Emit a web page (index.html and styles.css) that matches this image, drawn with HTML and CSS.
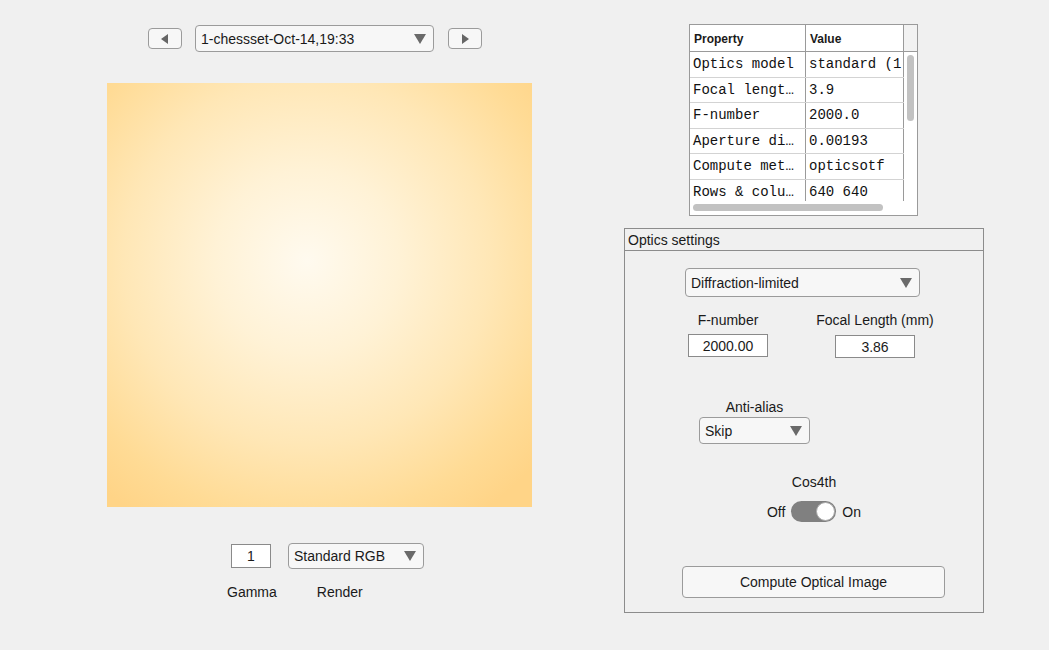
FILE: index.html
```html
<!DOCTYPE html>
<html>
<head>
<meta charset="utf-8">
<link rel="stylesheet" href="styles.css">
</head>
<body>
<div class="app">
  <div class="left">
    <div class="nav">
      <button class="navbtn"><svg width="8" height="10" viewBox="0 0 8 10"><path d="M7 0 L0 5 L7 10 Z" fill="#666"/></svg></button>
      <div class="select sel-scene"><span>1-chessset-Oct-14,19:33</span><span class="caret"></span></div>
      <button class="navbtn"><svg width="8" height="10" viewBox="0 0 8 10"><path d="M1 0 L8 5 L1 10 Z" fill="#666"/></svg></button>
    </div>
    <div class="image"></div>
    <div class="render-row">
      <div class="field gamma">1</div>
      <div class="select sel-render"><span>Standard RGB</span><span class="caret"></span></div>
    </div>
    <div class="render-labels">
      <span class="lbl-gamma">Gamma</span>
      <span class="lbl-render">Render</span>
    </div>
  </div>
  <div class="right">
    <div class="table">
      <div class="thead">
        <div class="c1">Property</div><div class="c2">Value</div><div class="c3"></div>
      </div>
      <div class="tbody">
        <div class="rows">
          <div class="row"><div class="c1">Optics model</div><div class="c2">standard (1.</div></div>
          <div class="row"><div class="c1">Focal lengt…</div><div class="c2">3.9</div></div>
          <div class="row"><div class="c1">F-number</div><div class="c2">2000.0</div></div>
          <div class="row"><div class="c1">Aperture di…</div><div class="c2">0.00193</div></div>
          <div class="row"><div class="c1">Compute met…</div><div class="c2">opticsotf</div></div>
          <div class="row"><div class="c1">Rows &amp; colu…</div><div class="c2">640 640</div></div>
        </div>
        <div class="vscroll"><div class="vthumb"></div></div>
      </div>
      <div class="hscroll"><div class="hthumb"></div></div>
    </div>
    <div class="panel">
      <div class="panel-title">Optics settings</div>
      <div class="panel-body">
        <div class="select sel-model"><span>Diffraction-limited</span><span class="caret"></span></div>
        <div class="pair">
          <div class="pcol fcol">
            <div class="plabel">F-number</div>
            <div class="field fnum">2000.00</div>
          </div>
          <div class="pcol lcol">
            <div class="plabel">Focal Length (mm)</div>
            <div class="field flen">3.86</div>
          </div>
        </div>
        <div class="aa">
          <div class="plabel">Anti-alias</div>
          <div class="select sel-skip"><span>Skip</span><span class="caret"></span></div>
        </div>
        <div class="cos">
          <div class="plabel">Cos4th</div>
          <div class="toggle-row">
            <span>Off</span>
            <div class="switch"><div class="knob"></div></div>
            <span>On</span>
          </div>
        </div>
        <button class="compute">Compute Optical Image</button>
      </div>
    </div>
  </div>
</div>
</body>
</html>
```
FILE: styles.css
```css
* { box-sizing: border-box; }
html, body { margin: 0; padding: 0; }
body {
  background: #f0f0f0;
  font-family: "Liberation Sans", Arial, sans-serif;
  font-size: 14px;
  color: #1a1a1a;
  width: 1049px;
  height: 650px;
  overflow: hidden;
}
.app { display: flex; }
.left { width: 624px; display: flex; flex-direction: column; }
.nav {
  display: flex; align-items: center;
  margin: 25px 0 0 148px;
  height: 27px;
}
.navbtn {
  width: 34px; height: 21px;
  border: 1px solid #9b9b9b; border-radius: 4px;
  background: #f7f7f7;
  display: flex; align-items: center; justify-content: center;
  padding: 0;
}
.select {
  display: flex; align-items: center; justify-content: space-between;
  border: 1px solid #9b9b9b; border-radius: 4px;
  background: #f7f7f7;
  padding: 0 7px 0 5px;
  font-size: 14px;
}
.caret {
  width: 0; height: 0;
  border-left: 6px solid transparent; border-right: 6px solid transparent;
  border-top: 10px solid #6a6a6a;
}
.sel-scene { width: 239px; height: 27px; margin: 0 14px 0 13px; }
.image {
  margin: 31px 0 0 107px;
  width: 425px; height: 424px;
  background: radial-gradient(ellipse 72% 72% at 47% 42%, #fffaef 0%, #fff2d6 30%, #ffe7b6 60%, #ffdb95 85%, #ffd487 100%);
}
.render-row {
  display: flex; align-items: center;
  margin: 36px 0 0 231px;
}
.field {
  border: 1px solid #8a8a8a; background: #fff;
  display: flex; align-items: center; justify-content: center;
  font-size: 14px;
}
.gamma { width: 40px; height: 24px; }
.sel-render { width: 136px; height: 26px; margin-left: 17px; }
.render-labels {
  display: flex; margin: 15px 0 0 227px; font-size: 14px;
}
.lbl-render { margin-left: 40px; }

.right { width: 425px; display: flex; flex-direction: column; }
.table {
  margin: 24px 0 0 65px;
  width: 229px; height: 192px;
  border: 1px solid #9a9a9a; background: #f2f2f2;
  display: flex; flex-direction: column;
}
.thead { display: flex; height: 27px; background: #fff; border-bottom: 1px solid #9a9a9a; }
.thead div { font-size: 12px; font-weight: bold; padding: 7px 0 0 4px; }
.thead .c1 { width: 116px; border-right: 1px solid #9a9a9a; }
.thead .c2 { width: 98px; border-right: 1px solid #9a9a9a; }
.thead .c3 { flex: 1; background: #f2f2f2; }
.tbody { display: flex; height: 149px; overflow: hidden; background: #fff; }
.rows { width: 214px; }
.row { display: flex; height: 25.6px; border-bottom: 1px solid #d3d3d3; }
.row div {
  font-family: "Liberation Mono", "Courier New", monospace; font-size: 14px; color: #111;
  padding: 4px 0 0 3px; white-space: nowrap; overflow: hidden;
}
.row .c1 { width: 116px; border-right: 1px solid #9a9a9a; }
.row .c2 { width: 98px; border-right: 1px solid #9a9a9a; }
.vscroll { flex: 1; background: #fff; position: relative; }
.vthumb { width: 7px; height: 66px; margin: 3px 0 0 3px; background: #c2c2c2; border-radius: 4px; }
.hscroll { flex: 1; background: #fff; padding-top: 3px; }
.hthumb { width: 190px; height: 7px; margin-left: 3px; background: #c2c2c2; border-radius: 4px; }

.panel {
  margin: 12px 0 0 0;
  width: 360px; height: 385px;
  border: 1px solid #8c8c8c;
  display: flex; flex-direction: column;
}
.panel-title {
  height: 22px; border-bottom: 1px solid #8c8c8c;
  padding: 3px 0 0 3px; font-size: 14px;
}
.panel-body { display: flex; flex-direction: column; }
.sel-model { width: 235px; height: 29px; margin: 17px 0 0 60px; }
.pair { display: flex; margin-top: 15px; }
.pcol { display: flex; flex-direction: column; align-items: center; }
.plabel { font-size: 14px; line-height: 17px; }
.fcol { width: 80px; margin-left: 63px; }
.lcol { width: 130px; margin-left: 42px; }
.field.fnum { width: 80px; height: 23px; margin-top: 5px; }
.field.flen { width: 80px; height: 23px; margin-top: 6px; }
.aa { display: flex; flex-direction: column; align-items: center; width: 111px; margin: 41px 0 0 74px; }
.sel-skip { width: 111px; height: 27px; margin-top: 1px; }
.cos { display: flex; flex-direction: column; align-items: center; width: 100px; margin: 30px 0 0 139px; }
.toggle-row { display: flex; align-items: center; margin-top: 10px; }
.switch {
  width: 45px; height: 21px; border-radius: 11px; background: #808080;
  margin: 0 6px; display: flex; justify-content: flex-end; padding: 1px;
}
.knob { width: 19px; height: 19px; border-radius: 50%; background: #fff; border: 1px solid #aaa; }
.compute {
  width: 263px; height: 32px; margin: 44px 0 0 57px;
  border: 1px solid #9b9b9b; border-radius: 4px; background: #f7f7f7;
  font-family: "Liberation Sans", Arial, sans-serif; font-size: 14px; color: #1a1a1a;
}
```
